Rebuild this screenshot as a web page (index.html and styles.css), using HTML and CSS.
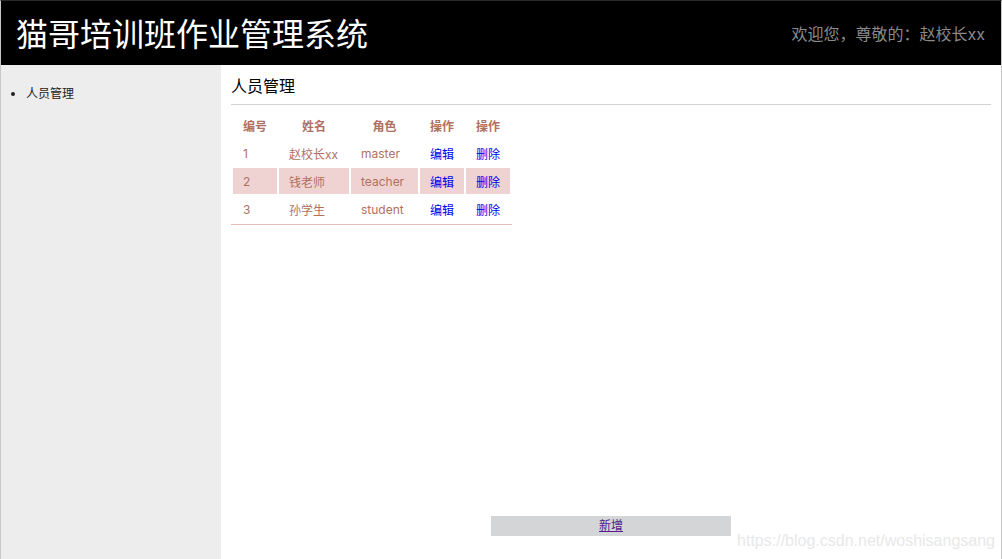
FILE: index.html
```html
<!DOCTYPE html>
<html lang="zh-CN">
<head>
    <meta charset="UTF-8">
    <meta name="viewport" content="width=device-width, initial-scale=1.0">
    <title>猫哥培训班作业管理系统</title>
    <link rel="stylesheet" href="styles.css">
</head>
<body>
    <div class="header">
        <h1 class="title">猫哥培训班作业管理系统</h1>
        <span class="welcome">欢迎您，尊敬的：赵校长xx</span>
    </div>
    <div class="content">
        <div class="menu">
            <ul>
                <li>人员管理</li>
            </ul>
        </div>
        <div class="main">
            <div class="main-title">人员管理</div>
            <table class="user-table">
                <thead>
                    <tr>
                        <th class="col-id">编号</th>
                        <th class="col-name">姓名</th>
                        <th class="col-role">角色</th>
                        <th class="col-op">操作</th>
                        <th class="col-op">操作</th>
                    </tr>
                </thead>
                <tbody>
                    <tr>
                        <td>1</td>
                        <td>赵校长xx</td>
                        <td>master</td>
                        <td><a href="#">编辑</a></td>
                        <td><a href="#">删除</a></td>
                    </tr>
                    <tr class="even">
                        <td>2</td>
                        <td>钱老师</td>
                        <td>teacher</td>
                        <td><a href="#">编辑</a></td>
                        <td><a href="#">删除</a></td>
                    </tr>
                    <tr>
                        <td>3</td>
                        <td>孙学生</td>
                        <td>student</td>
                        <td><a href="#">编辑</a></td>
                        <td><a href="#">删除</a></td>
                    </tr>
                </tbody>
            </table>
            <div class="add-bar"><a href="#" class="add-link">新增</a></div>
        </div>
    </div>
    <div class="watermark">https://blog.csdn.net/woshisangsang</div>
</body>
</html>
```

FILE: styles.css
```css
/* 整体布局 */
* {
    margin: 0;
    padding: 0;
    box-sizing: border-box;
}

body {
    height: 100vh;
    display: flex;
    flex-direction: column;
    border-top: 1px solid #2a2a2a;
    border-left: 1px solid #c8c8c8;
    border-right: 1px solid #c8c8c8;
    font-family: Inter, "Noto Sans CJK SC", sans-serif;
    font-size: 12px;
    background-color: #fff;
    overflow: hidden;
}

/* 顶部 */
.header {
    height: 64px;
    background-color: #000;
    display: flex;
    align-items: center;
    justify-content: space-between;
    padding: 0 16px 0 15px;
}

.title {
    color: #fff;
    font-size: 32px;
    font-weight: normal;
    margin-top: -2px;
}

.welcome {
    color: #8a8a8a;
    font-size: 16px;
}

/* 内容区 */
.content {
    flex: 1;
    display: flex;
}

.menu {
    width: 220px;
    background-color: #ededed;
    padding-top: 19px;
}

.menu ul {
    padding-left: 25px;
    color: #222;
}

.main {
    flex: 1;
    display: flex;
    flex-direction: column;
    padding: 10px 10px 0 10px;
}

.main-title {
    font-size: 16px;
    color: #000;
    line-height: 22px;
    padding-bottom: 7px;
    border-bottom: 1px solid #d3d3d3;
    margin-bottom: 5px;
}

/* 表格 */
.user-table {
    border-spacing: 2px;
    border-bottom: 1px solid #e6bcb6;
    color: #b0705f;
    align-self: flex-start;
}

.user-table th,
.user-table td {
    height: 26px;
    padding: 0 10px;
    white-space: nowrap;
}

.user-table th {
    font-weight: bold;
    text-align: center;
}

.user-table td {
    text-align: left;
}

.col-id {
    min-width: 44px;
}

.col-name {
    min-width: 70px;
}

.col-role {
    min-width: 67px;
}

.col-op {
    min-width: 44px;
}

.user-table tr.even td {
    background-color: #efd3d3;
}

.user-table a {
    color: #0000ee;
    text-decoration: none;
}

/* 新增按钮 */
.add-bar {
    width: 240px;
    height: 20px;
    line-height: 20px;
    margin: auto auto 23px auto;
    background-color: #d4d5d6;
    text-align: center;
}

.add-link {
    color: #551a8b;
}

.watermark {
    position: absolute;
    right: 7px;
    bottom: 9px;
    font-family: "Liberation Sans", Arial, sans-serif;
    font-size: 16px;
    color: #e8e8e8;
}
```
